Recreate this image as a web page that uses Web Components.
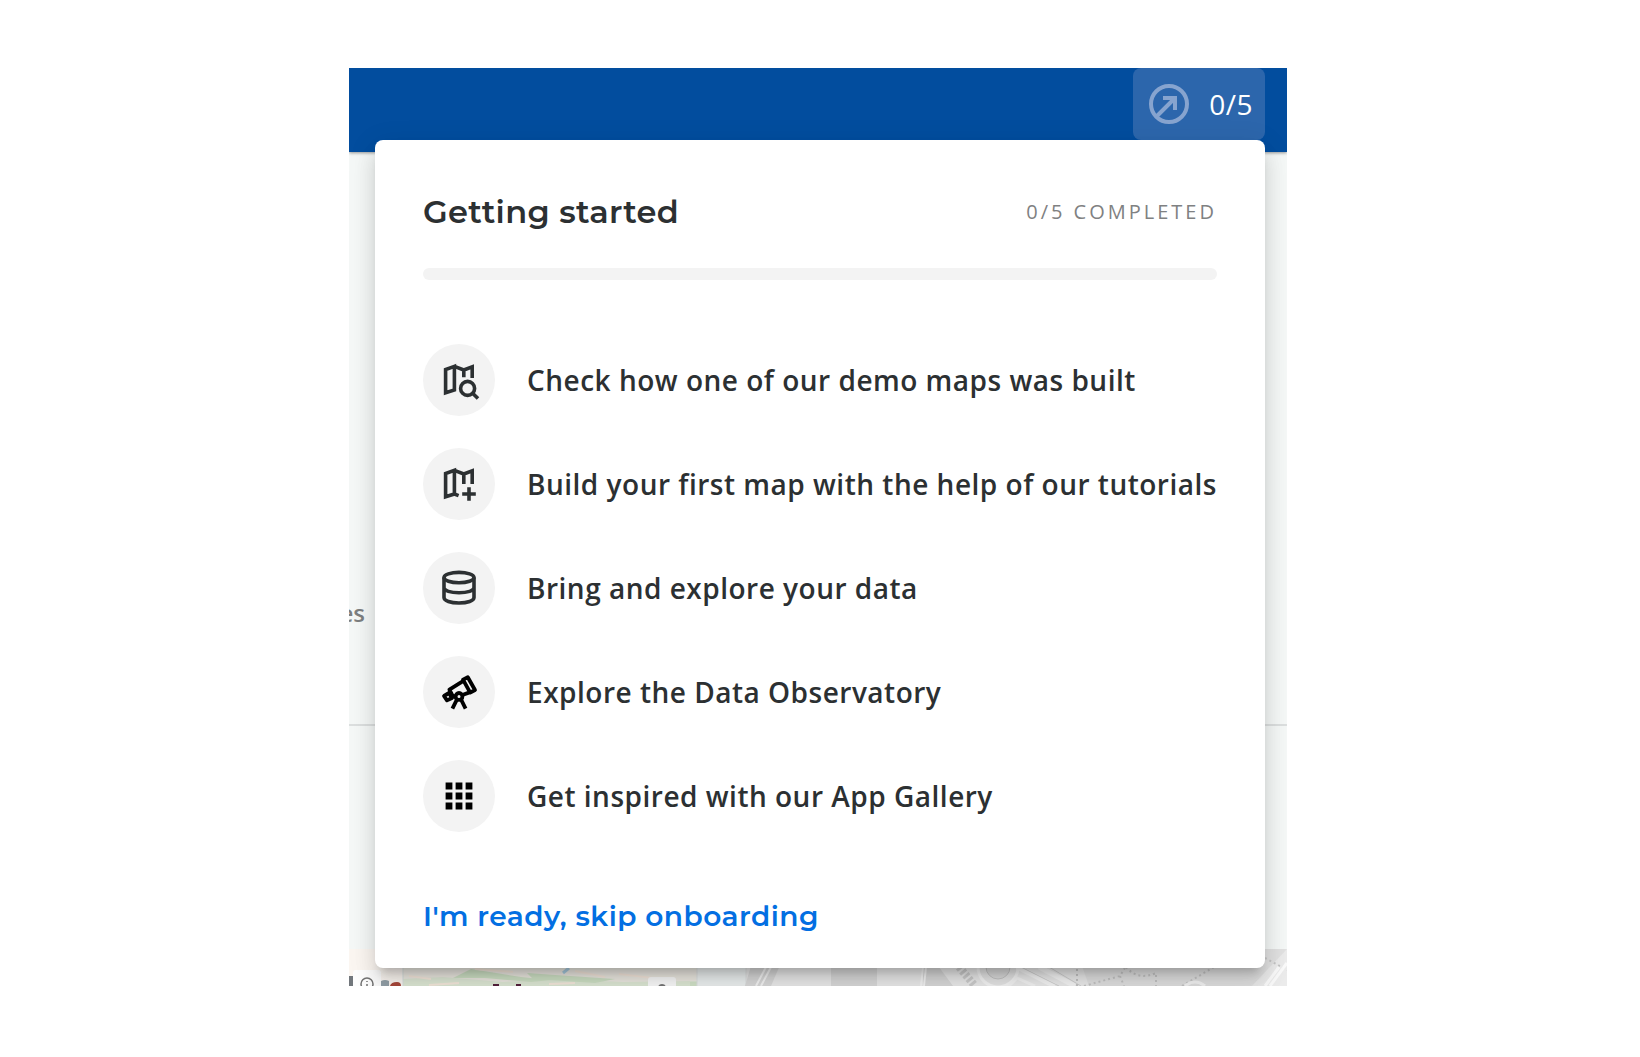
<!DOCTYPE html>
<html lang="en">
<head>
<meta charset="utf-8">
<title>Getting started</title>
<style>
  body { margin: 0; padding: 68px 4px 68px 0; background: #fff; font-family: "Open Sans", sans-serif; color: #2c3032; }
</style>
</head>
<body>
<onboarding-shell>
  <page-backdrop slot="page"></page-backdrop>
  <getting-started-panel slot="panel"></getting-started-panel>
</onboarding-shell>

<script>
function define(name, html) {
  const template = document.createElement('template');
  template.innerHTML = '<style>*{box-sizing:border-box}</style>' + html;
  customElements.define(name, class extends HTMLElement {
    constructor() {
      super();
      this.attachShadow({ mode: 'open' }).append(template.content.cloneNode(true));
    }
  });
}

/* Stacks the page and the floating panel in one grid cell, so the panel sets the height. */
define('onboarding-shell', `
<style>
  :host { display: grid; max-width: 938px; margin: 0 auto; overflow: hidden; }
  ::slotted(*) { grid-area: 1 / 1; min-width: 0; }
  ::slotted([slot=panel]) { margin: 72px 22px 18px 26px; z-index: 1; }
</style>
<slot name="page"></slot>
<slot name="panel"></slot>`);

define('progress-badge', `
<style>
  :host { display: block; }
  button { display: flex; align-items: center; gap: 16px; height: 72px; padding: 0 12px; border: 0; border-radius: 8px;
    background: #2c66ac; color: #fff; font: 400 28px/40px "Open Sans", sans-serif; letter-spacing: 0.018em; cursor: pointer; }
  svg { display: block; width: 48px; height: 48px; }
</style>
<button type="button">
  <svg viewBox="0 0 24 24" fill="none" stroke="#87a4cf" stroke-width="2" aria-hidden="true">
    <circle cx="12" cy="12" r="9"/><path d="M6 18l9-9M9 9h6v6"/>
  </svg>
  <span>0/5</span>
</button>`);

define('app-header', `
<style>
  :host { display: flex; justify-content: flex-end; align-items: flex-start; height: 84px; padding-right: 22px;
    background: #024d9e; box-shadow: 0 1px 3px rgba(0,0,0,.4); position: relative; }
</style>
<slot></slot>`);

define('map-strip', `
<style>
  :host { display: block; height: 37px; overflow: hidden; }
  svg { display: block; width: 100%; height: 37px; }
</style>
<svg viewBox="0 0 938 37" preserveAspectRatio="xMidYMid slice" aria-hidden="true">
  <rect width="938" height="37" fill="#ebebeb"/>
  <rect width="348" height="37" fill="#fbf6f1"/>
  <path d="M54 18H348V37H54z" fill="#eeebe3"/>
  <path d="M54 30l40-2 60 5 50-3 70 3 74-1V37H54z" fill="#dfe9d6"/>
  <path d="M104 29l18-9 50 8 30 3-20 2-46-4zM178 24l28 2 60 4-20 4-62-4z" fill="#cfe2c6"/>
  <path d="M60 27l22 3M126 20l38 3M226 22l30 6M270 25l34 4M80 36l30-2M200 35l26-1" stroke="#f6e9dd" stroke-width="2"/>
  <path d="M214 24l6-5" stroke="#a8cbe0" stroke-width="3"/><path d="M54 18v19" stroke="#d9e2e0"/>
  <rect x="341" y="33" width="7" height="4" fill="#d3e4c9"/>
  <rect x="348" width="49" height="37" fill="#edf1f1"/>
  <path d="M348 0v37M397 0v37" stroke="#dfe2e2"/>
  <path d="M407 0h31l-16 37h-26zM482 18h46v19h-46zM574 18h16l14 19h-30z" fill="#dadada"/>
  <path d="M417 18l-10 19M422 18l-10 19M574 18l-2 19M577 18l-2 19" stroke="#f5f5f5" stroke-width="2"/>
  <path d="M610 18l16 19" stroke="#cdcdcd" stroke-width="8" stroke-dasharray="3 2"/>
  <circle cx="649" cy="18" r="20" fill="#e6e6e6" stroke="#f6f6f6" stroke-width="3"/>
  <circle cx="649" cy="18" r="12" fill="#dcdcdc" stroke="#c6c6c6"/>
  <path d="M668 18l38 19M690 18l36 19" stroke="#f6f6f6" stroke-width="5"/>
  <path d="M672 18l38 19M700 18l32 19" stroke="#d0d0d0"/>
  <path d="M727 0h211l-35 37H740z" fill="#e1e1e1"/>
  <path d="M728 20v17M735 37l36-10 6-10M771 27l4 10M777 18q12 14 30 6V37M833 37l32-19M916 9l22 12" stroke="#c4c4c4" stroke-width="2" stroke-dasharray="2 3" fill="none"/>
  <path d="M660 37l8-8 18 8M836 37q10-8 20 0" stroke="#f4f4f4" stroke-width="3" fill="none"/>
  <path d="M938 14l-17 23M930 18l-14 19" stroke="#fafafa" stroke-width="3"/>
  <rect x="0" y="27" width="4" height="10" fill="#72777c"/>
  <path d="M32 32q4-2 8 0v5h-8z" fill="#93a0a8"/><path d="M41 37q1-4 7-4 4 0 4 4z" fill="#a9483b"/>
  <path d="M144 36h6M167 36h5" stroke="#54203c" stroke-width="2"/>
  <rect x="4" y="21" width="28" height="24" rx="3" fill="#fdfdfd"/>
  <circle cx="18" cy="35" r="6" fill="none" stroke="#747474" stroke-width="1.5"/><path d="M18 32v1M18 35v2" stroke="#747474" stroke-width="1.5"/>
  <rect x="299" y="28" width="28" height="20" rx="3" fill="#fbfbfb"/><circle cx="313" cy="39" r="4" fill="#777"/>
</svg>`);

define('page-backdrop', `
<style>
  :host { display: flex; flex-direction: column; background: #f5f8f7; }
  .upper { flex: 1; display: flex; align-items: center; border-bottom: 2px solid #dcdfdf; padding-top: 350px; }
  .tab { display: flex; justify-content: flex-end; width: 16px; overflow: hidden;
    font: 600 24px/32px "Open Sans", sans-serif; color: #7d7f80; }
  .lower { height: 223px; }
</style>
<app-header><progress-badge></progress-badge></app-header>
<div class="upper"><div class="tab">es</div></div>
<div class="lower"></div>
<map-strip></map-strip>`);

define('onboarding-step', `
<style>
  :host { display: block; }
  a { display: flex; align-items: center; gap: 32px; color: inherit; text-decoration: none; }
  .disc { flex: none; display: grid; place-items: center; width: 72px; height: 72px; border-radius: 50%; background: #f3f3f3; }
  ::slotted(svg) { display: block; width: 48px; height: 48px; }
  .label { font: 600 28px/40px "Open Sans", sans-serif; letter-spacing: 0.018em; white-space: nowrap; }
</style>
<a href="#"><span class="disc"><slot name="icon"></slot></span><span class="label"><slot></slot></span></a>`);

define('getting-started-panel', `
<style>
  :host { display: flex; flex-direction: column; padding: 48px 48px 32px; border-radius: 8px; background: #fff;
    box-shadow: 0 10px 10px -6px rgba(0,0,0,.2), 0 16px 20px 2px rgba(0,0,0,.09), 0 6px 28px 4px rgba(0,0,0,.07); }
  header { display: flex; justify-content: space-between; align-items: center; }
  h2 { margin: 0; font: 600 32px/48px Montserrat, Inter, sans-serif; letter-spacing: 0.01em; }
  .count { font: 400 20px/32px "Open Sans", sans-serif; letter-spacing: 3px; color: #7f8182; text-transform: uppercase; }
  progress { appearance: none; display: block; width: 100%; height: 12px; margin: 32px 0 64px; border: 0; border-radius: 6px; background: #f3f3f3; overflow: hidden; }
  progress::-webkit-progress-bar { background: #f3f3f3; }
  progress::-webkit-progress-value { background: #036fe2; }
  ul { display: flex; flex-direction: column; gap: 32px; margin: 0 0 64px; padding: 0; list-style: none; }
  .skip { align-self: flex-start; padding: 0; border: 0; background: none; color: #036fe2; font: 600 28px/40px Montserrat, Inter, sans-serif; letter-spacing: 0.018em; cursor: pointer; }
</style>
<header><h2>Getting started</h2><span class="count">0/5 completed</span></header>
<progress value="0" max="5" aria-label="Onboarding progress"></progress>
<ul>
  <li><onboarding-step>
    <svg slot="icon" viewBox="0 0 24 24" fill="none" stroke="#2c3032" stroke-width="1.8" aria-hidden="true">
      <path d="M9.7 5.2L5.3 6.8V18.4L9.7 17zM9.7 5.2L14.4 7L18.6 5.4V11M14.4 7V10.6"/>
      <circle cx="16.3" cy="16.2" r="3.5"/><path d="M18.8 18.6l2.7 2.7"/>
    </svg>Check how one of our demo maps was built</onboarding-step></li>
  <li><onboarding-step>
    <svg slot="icon" viewBox="0 0 24 24" fill="none" stroke="#2c3032" stroke-width="1.8" aria-hidden="true">
      <path d="M11.8 17.8L9.7 17L5.3 18.4V6.8L9.7 5.2V17M9.7 5.2L14.4 7L18.6 5.4V12M14.4 7V12"/>
      <path d="M17 13.6v6.8M13.6 17h6.8"/>
    </svg>Build your first map with the help of our tutorials</onboarding-step></li>
  <li><onboarding-step>
    <svg slot="icon" viewBox="0 0 24 24" fill="none" stroke="#2c3032" stroke-width="1.8" aria-hidden="true">
      <ellipse cx="12" cy="6.8" rx="7.5" ry="2.6"/>
      <path d="M4.5 6.8V16.8C4.5 18.5 7.8 19.5 12 19.5S19.5 18.5 19.5 16.8V6.8M4.5 11.8C4.5 13.4 7.8 14.4 12 14.4S19.5 13.4 19.5 11.8"/>
    </svg>Bring and explore your data</onboarding-step></li>
  <li><onboarding-step>
    <svg slot="icon" viewBox="0 0 24 24" fill="none" stroke="#000" stroke-width="1.9" stroke-linejoin="round" aria-hidden="true">
      <path d="M14 5.8L16.4 4.6L20 11L17.6 12.3zM13.8 6.7L7.2 10.8L8.7 13.7M17.3 12.2L14 13.4M4.5 14L7 12.5L8.5 15L6 16.2zM8.5 14.2H10"/>
      <circle cx="12" cy="14.2" r="1.7"/><path d="M11 15.7L8.7 20.3M13 15.7L15.3 20.3"/>
    </svg>Explore the Data Observatory</onboarding-step></li>
  <li><onboarding-step>
    <svg slot="icon" viewBox="0 0 24 24" fill="#000" aria-hidden="true">
      <path d="M5.3 5.3h3.4v3.4H5.3zM10.3 5.3h3.4v3.4h-3.4zM15.3 5.3h3.4v3.4h-3.4zM5.3 10.3h3.4v3.4H5.3zM10.3 10.3h3.4v3.4h-3.4zM15.3 10.3h3.4v3.4h-3.4zM5.3 15.3h3.4v3.4H5.3zM10.3 15.3h3.4v3.4h-3.4zM15.3 15.3h3.4v3.4h-3.4z"/>
    </svg>Get inspired with our App Gallery</onboarding-step></li>
</ul>
<button class="skip" type="button">I'm ready, skip onboarding</button>`);
</script>
</body>
</html>
